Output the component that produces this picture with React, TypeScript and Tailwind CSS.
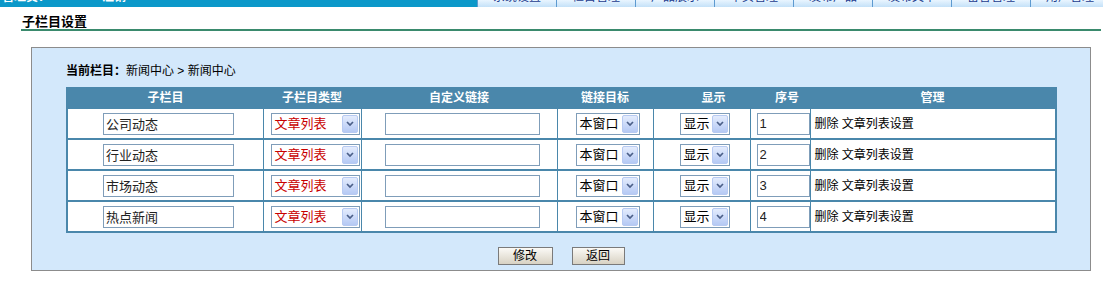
import { ReactNode } from 'react'

const tabs = ['系统设置', '栏目管理', '产品展示', '单页管理', '发布产品', '发布文章', '留言管理', '用户管理']

const rows = [
    { name: '公司动态', order: '1' },
    { name: '行业动态', order: '2' },
    { name: '市场动态', order: '3' },
    { name: '热点新闻', order: '4' }
]

function Select({ value, className = '', red = false }: { value: string; className?: string; red?: boolean }) {
    return (
        <div
            className={`inline-flex h-[22px] items-center justify-between border border-[#7f9db9] bg-white pl-[3px] pr-[1px] align-middle ${className}`}
        >
            <span className={`text-[13px] leading-none ${red ? 'text-[#c80000]' : 'text-black'}`}>{value}</span>
            <span className="flex h-[18px] w-[16px] items-center justify-center rounded-[2px] border border-[#b7caf2] bg-gradient-to-b from-[#e4ecfd] to-[#b5c9f4]">
                <svg width="8" height="6" viewBox="0 0 8 6">
                    <path d="M1 1 L4 4 L7 1" stroke="#4b5f88" strokeWidth="1.7" fill="none" />
                </svg>
            </span>
        </div>
    )
}

function TextBox({ value = '', className = '' }: { value?: string; className?: string }) {
    return (
        <input
            readOnly
            defaultValue={value}
            className={`h-[22px] border border-[#7f9db9] bg-white px-[2px] align-middle text-[13px] text-[#222] outline-none ${className}`}
        />
    )
}

function Cell({ children, className = '' }: { children?: ReactNode; className?: string }) {
    return <td className={`h-[31px] border-l border-[#4a87ab] p-0 align-middle first:border-l-0 ${className}`}>{children}</td>
}

export default function App() {
    return (
        <div className="h-[285px] w-full overflow-hidden bg-white font-['Liberation_Sans','Noto_Sans_CJK_SC',sans-serif] text-[12px] text-black">
            {/* top bar, page scrolled so only its bottom shows */}
            <div className="flex h-[7px] overflow-hidden">
                <div className="flex w-[477px] shrink-0 gap-[52px] bg-[#0b98c9] pl-[2px] font-bold text-white">
                    <span className="-mt-[10px] leading-[14px]">管理员：</span>
                    <span className="-mt-[10px] leading-[14px]">注销</span>
                </div>
                {tabs.map((t) => (
                    <div
                        key={t}
                        className="w-[79px] shrink-0 border-l border-[#5d9ad0] bg-gradient-to-b from-[#e9f5ff] to-[#c4e1f8] text-center text-[#1c3b8e]"
                    >
                        <div className="-mt-[10px] leading-[14px]">{t}</div>
                    </div>
                ))}
            </div>

            <div className="pl-[22px] pt-[8px]">
                <div className="text-[13px] font-bold leading-[14px]">子栏目设置</div>
            </div>
            <div className="ml-[21px] mr-[2px] h-[2px] bg-[#3a8a6d]" />

            <div className="ml-[31px] mt-[16px] w-[1060px] border border-[#8c8c8c] bg-[#d3e8fb] pb-[5px] pt-[16px]">
                <div className="pl-[34px] leading-[14px]">
                    <span className="font-bold">当前栏目：</span>新闻中心 &gt; 新闻中心
                </div>

                <div className="mt-[9px] pl-[34px]">
                    <table className="w-[989px] table-fixed border-collapse border-2 border-[#4a87ab] bg-white">
                        <colgroup>
                            <col className="w-[196px]" />
                            <col className="w-[98px]" />
                            <col className="w-[196px]" />
                            <col className="w-[96px]" />
                            <col className="w-[97px]" />
                            <col className="w-[60px]" />
                            <col className="w-[246px]" />
                        </colgroup>
                        <thead>
                            <tr className="h-[19px] bg-[#4a87ab] text-[12px] font-bold text-white">
                                <th className="p-0 font-bold">子栏目</th>
                                <th className="p-0 font-bold">子栏目类型</th>
                                <th className="p-0 font-bold">自定义链接</th>
                                <th className="p-0 font-bold">链接目标</th>
                                <th className="p-0 pl-[24px] font-bold">显示</th>
                                <th className="p-0 pl-[14px] font-bold">序号</th>
                                <th className="p-0 font-bold">管理</th>
                            </tr>
                        </thead>
                        <tbody>
                            {rows.map((r) => (
                                <tr key={r.order} className="border-t-2 border-[#4a87ab]">
                                    <Cell className="pl-[35px]">
                                        <TextBox value={r.name} className="w-[131px]" />
                                    </Cell>
                                    <Cell className="pl-[7px]">
                                        <Select value="文章列表" red className="w-[89px]" />
                                    </Cell>
                                    <Cell className="pl-[23px]">
                                        <TextBox className="w-[155px]" />
                                    </Cell>
                                    <Cell className="pl-[18px]">
                                        <Select value="本窗口" className="w-[64px]" />
                                    </Cell>
                                    <Cell className="pl-[26px]">
                                        <Select value="显示" className="w-[50px]" />
                                    </Cell>
                                    <Cell className="pl-[6px]">
                                        <TextBox value={r.order} className="w-[53px]" />
                                    </Cell>
                                    <Cell className="pl-[4px]">
                                        <a className="cursor-pointer">删除</a> <a className="cursor-pointer">文章列表设置</a>
                                    </Cell>
                                </tr>
                            ))}
                        </tbody>
                    </table>
                </div>

                <div className="mt-[14px] flex justify-center gap-[19px]">
                    <button className="h-[18px] w-[55px] border border-[#7a7a7a] bg-gradient-to-b from-[#fbfaf6] to-[#d8d2c3] text-[12px] leading-none">
                        修改
                    </button>
                    <button className="h-[18px] w-[53px] border border-[#7a7a7a] bg-gradient-to-b from-[#fbfaf6] to-[#d8d2c3] text-[12px] leading-none">
                        返回
                    </button>
                </div>
            </div>
        </div>
    )
}
